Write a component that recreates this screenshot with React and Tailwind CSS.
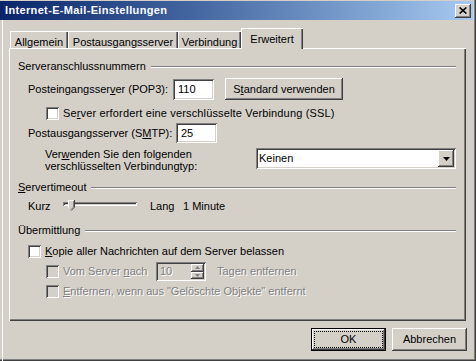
import React from "react";

const R = "[box-shadow:inset_-1px_-1px_#404040,inset_1px_1px_#ffffff,inset_-2px_-2px_#808080,inset_2px_2px_#d4d0c8]";
const S = "[box-shadow:inset_1px_1px_#808080,inset_-1px_-1px_#ffffff,inset_2px_2px_#404040,inset_-2px_-2px_#d4d0c8]";
const DIS = "text-[#808080] [text-shadow:1px_1px_0_#ffffff]";

function Check({ disabled }) {
  return (
    <span
      className={`block shrink-0 w-[13px] h-[13px] ${disabled ? "bg-[#d4d0c8]" : "bg-white"} ${S}`}
    />
  );
}

function Group({ className, children }) {
  return (
    <div className={`h-[13px] flex items-center ${className}`}>
      <span className="whitespace-nowrap">{children}</span>
      <span className="ml-[5px] flex-1 h-[2px] border-t border-[#808080] bg-white" />
    </div>
  );
}

function Tab({ className, children }) {
  return (
    <div
      className={`h-[17px] pt-[3px] flex justify-center whitespace-nowrap [box-shadow:inset_1px_1px_#ffffff,inset_-1px_0_#404040,inset_-2px_0_#808080] ${className}`}
    >
      {children}
    </div>
  );
}

function U({ children }) {
  return <span className="underline underline-offset-[1px]">{children}</span>;
}

export default function App() {
  return (
    <div className="w-[476px] h-[361px] bg-[#d4d0c8] pt-[1px] flex flex-col overflow-hidden font-['Liberation_Sans',Arial,sans-serif] text-[11px] text-black [box-shadow:inset_-1px_-1px_#404040,inset_-2px_-2px_#808080] select-none">
      {/* Title bar */}
      <div className="h-[19px] mr-[3px] bg-linear-to-r from-[#0a246a] to-[#a6caf0] flex items-center pl-[5px] pr-[2px]">
        <span className="flex-1 text-white font-bold text-[11px] tracking-[0.35px]">
          Internet-E-Mail-Einstellungen
        </span>
        <div className={`w-[16px] h-[14px] bg-[#d4d0c8] flex items-center justify-center ${R}`}>
          <svg width="8" height="7" viewBox="0 0 8 7">
            <path d="M0.6 0.5 L7.4 6.5 M7.4 0.5 L0.6 6.5" stroke="#000" strokeWidth="1.6" fill="none" />
          </svg>
        </div>
      </div>

      <div className="flex-1 ml-[2px] border-l border-white pl-[6px] pr-[9px] flex flex-col">
        {/* Tabs */}
        <div className="mt-[8px] h-[20px] flex items-end relative z-10 pl-[1px]">
          <Tab className="w-[58px]">Allgemein</Tab>
          <Tab className="w-[110px]">Postausgangsserver</Tab>
          <Tab className="w-[63px]">Verbindung</Tab>
          <div className="w-[62px] h-[21px] -mb-[1px] pt-[3px] bg-[#d4d0c8] flex justify-center [box-shadow:inset_1px_1px_#ffffff,inset_-1px_0_#404040,inset_-2px_0_#808080]">
            Erweitert
          </div>
        </div>

        {/* Panel */}
        <div className="h-[273px] mr-[1px] flex flex-col pl-[9px] pr-[10px] [box-shadow:inset_1px_1px_#ffffff,inset_-1px_-1px_#404040,inset_-2px_-2px_#808080]">
          <Group className="mt-[12px]">Serveranschlussnummern</Group>

          <div className="mt-[5px] h-[22px] flex items-center">
            <span className="ml-[10px] w-[145px] whitespace-nowrap">
              Posteingangsser<U>v</U>er (POP3):
            </span>
            <div className={`w-[41px] h-[21px] bg-white flex items-center pl-[5px] ${S}`}>110</div>
            <div className={`ml-[11px] w-[118px] h-[22px] flex items-center justify-center ${R}`}>
              <span>
                S<U>t</U>andard verwenden
              </span>
            </div>
          </div>

          <div className="mt-[6px] h-[14px] flex items-center">
            <span className="ml-[28px]">
              <Check />
            </span>
            <span className="ml-[4px] whitespace-nowrap tracking-[0.15px]">
              Se<U>r</U>ver erfordert eine verschlüsselte Verbindung (SSL)
            </span>
          </div>

          <div className="mt-[3px] h-[20px] flex items-center">
            <span className="ml-[10px] w-[148px] whitespace-nowrap">
              Postausgangsserver (S<U>M</U>TP):
            </span>
            <div className={`w-[41px] h-[20px] bg-white flex items-center pl-[5px] ${S}`}>25</div>
          </div>

          <div className="mt-[5px] flex items-start">
            <div className="ml-[27px] w-[211px] leading-[12px]">
              Ver<U>w</U>enden Sie den folgenden
              <br />
              verschlüsselten Verbindungtyp:
            </div>
            <div className={`w-[200px] h-[21px] bg-white flex items-center pl-[3px] pr-[2px] ${S}`}>
              <span className="flex-1">Keinen</span>
              <div className={`w-[16px] h-[17px] bg-[#d4d0c8] flex items-center justify-center ${R}`}>
                <svg width="7" height="4" viewBox="0 0 7 4">
                  <polygon points="0,0 7,0 3.5,4" fill="#000" />
                </svg>
              </div>
            </div>
          </div>

          <Group className="mt-[9px]">
            <U>S</U>ervertimeout
          </Group>

          <div className="mt-[4px] h-[16px] flex items-center">
            <span className="ml-[10px] w-[35px]">Kurz</span>
            <div className="relative w-[74px] h-[12px]">
              <div className="mt-[2px] h-[4px] bg-[#d4d0c8] [box-shadow:inset_1px_1px_#808080,inset_-1px_-1px_#ffffff,inset_2px_2px_#404040]" />
              <svg className="absolute left-[5px] top-0" width="7" height="11" viewBox="0 0 7 11">
                <polygon points="0,0 6,0 6,7 3,10 0,7" fill="#d4d0c8" />
                <polyline points="0.5,7.5 0.5,0.5 5.5,0.5" fill="none" stroke="#ffffff" strokeWidth="1" />
                <polyline points="6.5,0 6.5,7.2 3.2,10.5" fill="none" stroke="#404040" strokeWidth="1" />
                <polyline points="5.5,1 5.5,7 3,9.5" fill="none" stroke="#808080" strokeWidth="1" />
              </svg>
            </div>
            <span className="ml-[13px] w-[33px]">Lang</span>
            <span>1 Minute</span>
          </div>

          <Group className="mt-[10px]">Übermittlung</Group>

          <div className="mt-[7px] h-[14px] flex items-center">
            <span className="ml-[10px]">
              <Check />
            </span>
            <span className="ml-[4px] whitespace-nowrap">
              <U>K</U>opie aller Nachrichten auf dem Server belassen
            </span>
          </div>

          <div className="mt-[3px] h-[20px] flex items-center">
            <span className="ml-[28px]">
              <Check disabled />
            </span>
            <span className={`ml-[4px] w-[93px] whitespace-nowrap ${DIS}`}>
              Vom Server <U>n</U>ach
            </span>
            <div className={`w-[50px] h-[19px] bg-[#d4d0c8] flex p-[2px] ${S}`}>
              <span className={`flex-1 pl-[2px] flex items-center ${DIS}`}>10</span>
              <div className="w-[13px] flex flex-col">
                <div className={`h-[8px] flex items-center justify-center ${R}`}>
                  <svg width="5" height="3" viewBox="0 0 5 3">
                    <polygon points="2.5,0 5,3 0,3" fill="#808080" />
                  </svg>
                </div>
                <div className={`h-[7px] flex items-center justify-center ${R}`}>
                  <svg width="5" height="3" viewBox="0 0 5 3">
                    <polygon points="0,0 5,0 2.5,3" fill="#808080" />
                  </svg>
                </div>
              </div>
            </div>
            <span className={`ml-[11px] whitespace-nowrap ${DIS}`}>Tagen entfernen</span>
          </div>

          <div className="mt-[3px] h-[14px] flex items-center">
            <span className="ml-[28px]">
              <Check disabled />
            </span>
            <span className={`ml-[4px] whitespace-nowrap ${DIS}`}>
              <U>E</U>ntfernen, wenn aus "Gelöschte Objekte" entfernt
            </span>
          </div>
        </div>

        {/* Buttons */}
        <div className="mt-[7px] flex justify-end gap-[6px]">
          <div className="w-[75px] h-[23px] border border-black">
            <div className={`h-full p-[2px] ${R}`}>
              <div className="h-full border border-dotted border-black flex items-center justify-center">
                OK
              </div>
            </div>
          </div>
          <div className={`w-[75px] h-[23px] flex items-center justify-center ${R}`}>Abbrechen</div>
        </div>
      </div>
    </div>
  );
}
